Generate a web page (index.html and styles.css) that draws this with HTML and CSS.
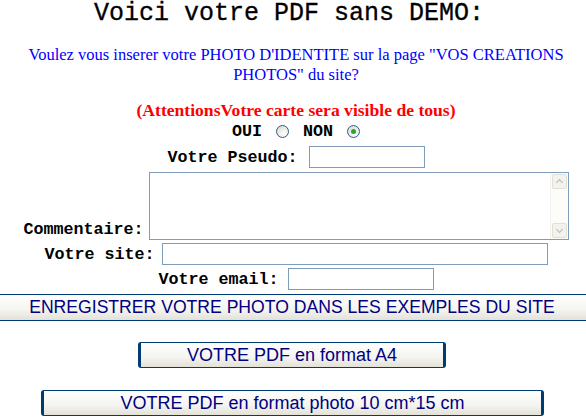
FILE: index.html
```html
<!DOCTYPE html>
<html>
<head>
<meta charset="utf-8">
<link rel="stylesheet" href="styles.css">
</head>
<body>
<div class="page">
  <h1 class="title">Voici votre PDF sans DEMO:</h1>
  <p class="question">Voulez vous inserer votre PHOTO D'IDENTITE sur la page "VOS CREATIONS PHOTOS" du site?</p>
  <p class="warning">(AttentionsVotre carte sera visible de tous)</p>
  <div class="row choice">
    <span class="lbl">OUI</span><span class="radio"></span>
    <span class="lbl">NON</span><span class="radio checked"></span>
  </div>
  <div class="row pseudo">
    <span class="lbl">Votre Pseudo:</span><span class="input w-pseudo"></span>
  </div>
  <div class="row comment">
    <span class="lbl">Commentaire:</span>
    <span class="textarea"><span class="sb"><span class="sbtn up"></span><span class="sbtn down"></span></span></span>
  </div>
  <div class="row site">
    <span class="lbl">Votre site:</span><span class="input w-site"></span>
  </div>
  <div class="row email">
    <span class="lbl">Votre email:</span><span class="input w-email"></span>
  </div>
  <div class="btn wide">ENREGISTRER VOTRE PHOTO DANS LES EXEMPLES DU SITE</div>
  <div class="btnrow"><div class="btn a4">VOTRE PDF en format A4</div></div>
  <div class="btnrow"><div class="btn photo">VOTRE PDF en format photo 10 cm*15 cm</div></div>
</div>
</body>
</html>
```

FILE: styles.css
```css
html, body {
  margin: 0;
  padding: 0;
  background: #fff;
  overflow: hidden;
}
.page {
  width: 592px;
  text-align: center;
}
.title {
  margin: 0;
  padding: 1px 14px 0 0;
  font-family: "Liberation Mono", monospace;
  font-weight: normal;
  font-size: 25px;
  line-height: 25px;
  height: 25px;
  color: #000;
  -webkit-text-stroke: 0.3px #000;
}
.question {
  margin: 19px 0 0;
  font-family: "Liberation Serif", serif;
  font-size: 16.5px;
  line-height: 20px;
  color: #0000ff;
  padding: 0 22px 0 22px;
}
.warning {
  margin: 15px 0 0;
  font-family: "Liberation Serif", serif;
  font-weight: bold;
  font-size: 17.6px;
  line-height: 20px;
  color: #ff0000;
}
.row {
  display: flex;
  justify-content: center;
  align-items: center;
  font-family: "Liberation Mono", monospace;
  font-weight: bold;
  font-size: 16.7px;
  color: #000;
}
.choice {
  height: 20px;
  gap: 14px;
  margin-top: 1px;
}
.radio {
  width: 11px;
  height: 11px;
  border: 1px solid #2d5d8c;
  border-radius: 50%;
  background: radial-gradient(circle at 65% 70%, #ffffff 0%, #e6e6e0 60%, #cfcfc8 100%);
  box-sizing: content-box;
  position: relative;
}
.radio.checked::after {
  content: "";
  position: absolute;
  left: 3px;
  top: 3px;
  width: 5px;
  height: 5px;
  border-radius: 50%;
  background: #2aa52a;
}
.pseudo {
  margin-top: 5px;
  gap: 11px;
  height: 22px;
}
.input {
  display: block;
  height: 20px;
  border: 1px solid #7f9db9;
  background: #fff;
}
.w-pseudo { width: 114px; }
.w-site { width: 384px; }
.w-email { width: 144px; }
.comment {
  margin-top: 4px;
  align-items: flex-end;
  gap: 5px;
}
.comment .lbl { line-height: 16px; margin-bottom: 2px; }
.textarea {
  display: block;
  width: 418px;
  height: 66px;
  border: 1px solid #7f9db9;
  background: #fff;
  position: relative;
}
.sb {
  position: absolute;
  right: 0;
  top: 0;
  bottom: 0;
  width: 17px;
  background: #fcfcf8;
  border-left: 1px solid #f3f3ee;
}
.sbtn {
  position: absolute;
  left: 1px;
  width: 15px;
  height: 15px;
  background: #f3f2ec;
  border: 1px solid #e2e0d6;
  border-radius: 2px;
  box-sizing: border-box;
}
.sbtn.up { top: 1px; }
.sbtn.down { bottom: 1px; }
.sbtn::after {
  content: "";
  position: absolute;
  left: 4px;
  width: 4px;
  height: 4px;
  border-left: 1px solid #b9b9b0;
  border-top: 1px solid #b9b9b0;
}
.sbtn.up::after { top: 5px; transform: rotate(45deg); }
.sbtn.down::after { top: 3px; transform: rotate(225deg); }
.site {
  margin-top: 3px;
  gap: 7px;
}
.email {
  margin-top: 3px;
  gap: 9px;
}
.btn {
  font-family: "Liberation Sans", Arial, sans-serif;
  font-size: 18px;
  color: #000080;
  background: linear-gradient(#ffffff 0%, #f4f4f0 60%, #e3e1d7 100%);
  border: 1px solid #003c74;
  border-radius: 3px;
  box-sizing: border-box;
  text-align: center;
  line-height: 24px;
  white-space: nowrap;
}
.wide {
  margin-top: 4px;
  width: 586px;
  height: 27px;
  font-size: 17.6px;
  padding-right: 2px;
  border-left: none;
  border-right: none;
  border-radius: 0;
}
.btnrow {
  display: flex;
  justify-content: center;
}
.a4 {
  margin-top: 21px;
  width: 308px;
  height: 26px;
  margin-right: 8px;
  border-left-width: 3px;
  border-right-width: 3px;
}
.photo {
  margin-top: 22px;
  width: 503px;
  height: 26px;
  margin-right: 7px;
  border-left-width: 3px;
  border-right-width: 3px;
}
```
